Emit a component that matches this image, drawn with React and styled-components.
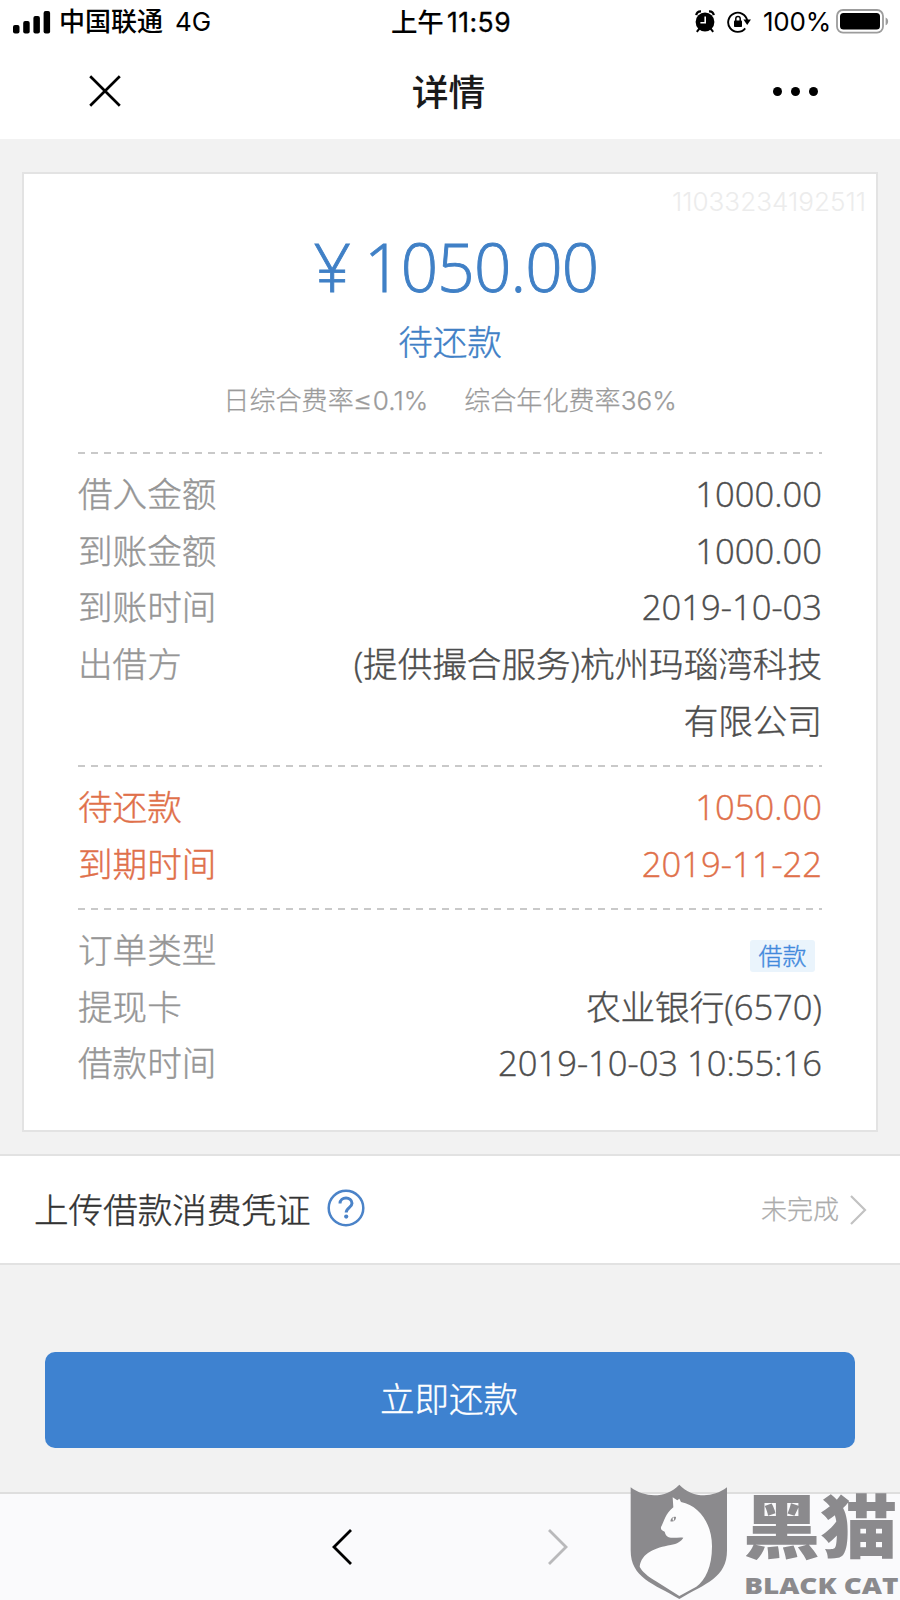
import React from "react";
import styled, { createGlobalStyle } from "styled-components";

const summary = [
  { label: "借入金额", value: "1000.00" },
  { label: "到账金额", value: "1000.00" },
  { label: "到账时间", value: "2019-10-03" },
  { label: "出借方", value: "(提供撮合服务)杭州玛瑙湾科技有限公司" },
];

const repayment = [
  { label: "待还款", value: "1050.00" },
  { label: "到期时间", value: "2019-11-22" },
];

const order = [
  { label: "订单类型", tag: "借款" },
  { label: "提现卡", value: "农业银行(6570)" },
  { label: "借款时间", value: "2019-10-03 10:55:16" },
];

const SignalIcon = () => (
  <svg width="38" height="24" viewBox="0 0 38 24">
    <rect x="0" y="15" width="6.5" height="8.5" rx="2" />
    <rect x="10.2" y="11" width="6.5" height="12.5" rx="2" />
    <rect x="20.4" y="6" width="6.5" height="17.5" rx="2" />
    <rect x="30.6" y="1" width="6.5" height="22.5" rx="2" />
  </svg>
);

const AlarmIcon = () => (
  <svg width="20" height="23" viewBox="0 0 20 23">
    <circle cx="10" cy="12" r="9.4" />
    <path
      d="M1.2 5.2C1.6 2.6 3.4 1.2 6 1.3M18.8 5.2C18.4 2.6 16.6 1.2 14 1.3"
      fill="none"
      stroke="#000"
      strokeWidth="2.2"
    />
    <path d="M4.5 18.5L1.8 21.8M15.5 18.5L18.2 21.8" stroke="#000" strokeWidth="2" />
    <path d="M10.2 6.6V12.8H5.4" fill="none" stroke="#fff" strokeWidth="1.6" />
  </svg>
);

const RotationLockIcon = () => (
  <svg width="24" height="22" viewBox="0 0 24 22">
    <path
      d="M20.2 9.5A9.6 9.6 0 1 0 18.2 17.4"
      fill="none"
      stroke="#000"
      strokeWidth="1.9"
    />
    <path d="M16.4 8.4H24L20.2 14Z" />
    <rect x="7" y="9.4" width="8" height="6.6" rx="0.8" />
    <path d="M8.8 10V7.6a2.2 2.2 0 0 1 4.4 0V10" fill="none" stroke="#000" strokeWidth="1.5" />
  </svg>
);

const BatteryIcon = () => (
  <svg width="53" height="25" viewBox="0 0 53 25">
    <rect x="1" y="1" width="46" height="22.6" rx="6" fill="none" stroke="#9c9c9c" strokeWidth="1.8" />
    <rect x="4" y="4" width="40" height="16.6" rx="3.5" />
    <path d="M49.6 8.4C53 9.6 53 15 49.6 16.2Z" fill="#9c9c9c" />
  </svg>
);

const CloseIcon = () => (
  <svg width="32" height="32" viewBox="0 0 32 32">
    <path d="M1.2 1.2L30.8 30.8M30.8 1.2L1.2 30.8" stroke="#000" strokeWidth="2.7" />
  </svg>
);

const HelpIcon = () => (
  <svg width="38" height="38" viewBox="0 0 38 38" fill="none" stroke="#4b83c8">
    <circle cx="19" cy="19" r="17.3" strokeWidth="2.5" />
    <path
      d="M13 14.6C13 7.2 25 7.4 25 14.2C25 18.6 19.2 18.6 19.2 23.6"
      strokeWidth="3"
    />
    <circle cx="19.2" cy="27.6" r="2.1" fill="#4b83c8" stroke="none" />
  </svg>
);

const Chevron = ({ left, color, width, height, stroke }) => (
  <svg width={width} height={height} viewBox={`0 0 ${width} ${height}`}>
    <path
      d={
        left
          ? `M${width - 1} 1L2 ${height / 2}L${width - 1} ${height - 1}`
          : `M1 1L${width - 2} ${height / 2}L1 ${height - 1}`
      }
      fill="none"
      stroke={color}
      strokeWidth={stroke}
    />
  </svg>
);

const CatShield = () => (
  <svg width="98" height="116" viewBox="92 103 294 348">
    <path
      d="M94 113C142 148 202 144 240 105C278 144 336 148 383 113V302C383 385 318 402 240 448C162 402 94 385 94 302Z"
      fill="#8b8a8d"
    />
    <path
      d="M220 143L234 152L240 147L245 157C300 168 338 222 338 290C338 352 318 392 291 411L240 439L170 395C146 380 128 366 121 351C126 310 168 294 214 286C234 282 246 275 252 264C236 262 222 267 208 263C200 259 198 253 196 246C186 243 184 238 185 232C194 218 196 194 222 173Z"
      fill="#fcfcfd"
    />
    <path d="M213 215C214 205 222 199 230 202C230 212 223 218 213 215Z" fill="#8b8a8d" />
    <ellipse cx="222" cy="208" rx="2.2" ry="5" fill="#fcfcfd" />
  </svg>
);

const InfoRow = ({ label, value, tag, accent }) => (
  <Row $accent={accent}>
    <dt>{label}</dt>
    <dd>{tag ? <Tag>{tag}</Tag> : value}</dd>
  </Row>
);

const App = () => {
  return (
    <>
      <GlobalStyle />
      <Page>
        <StatusBar>
          <Carrier>
            <SignalIcon />
            <span>中国联通</span>
            <span className="network">4G</span>
          </Carrier>
          <Clock>
            上午<span>11:59</span>
          </Clock>
          <Indicators>
            <AlarmIcon />
            <RotationLockIcon />
            <span>100%</span>
            <BatteryIcon />
          </Indicators>
        </StatusBar>
        <NavBar>
          <CloseIcon />
          <h1>详情</h1>
          <Dots>
            <i />
            <i />
            <i />
          </Dots>
        </NavBar>

        <Card>
          <Serial>11033234192511</Serial>
          <Amount>
            <span>¥</span>1050.00
          </Amount>
          <State>待还款</State>
          <Rates>
            <span>
              日综合费率<b>≤</b>0.1%
            </span>
            <span>综合年化费率36%</span>
          </Rates>
          <Divider />
          <Rows>
            {summary.map((item) => (
              <InfoRow key={item.label} {...item} />
            ))}
          </Rows>
          <Divider />
          <Rows>
            {repayment.map((item) => (
              <InfoRow key={item.label} {...item} accent />
            ))}
          </Rows>
          <Divider />
          <Rows>
            {order.map((item) => (
              <InfoRow key={item.label} {...item} />
            ))}
          </Rows>
        </Card>

        <Voucher>
          <span className="title">上传借款消费凭证</span>
          <HelpIcon />
          <span className="status">未完成</span>
          <Chevron color="#c2c2c2" width={17} height={30} stroke={2.2} />
        </Voucher>

        <PayButton>立即还款</PayButton>

        <ToolBar>
          <Chevron left color="#000" width={20} height={36} stroke={2.8} />
          <Chevron color="#b9b9bb" width={20} height={36} stroke={2.8} />
        </ToolBar>

        <Watermark>
          <CatShield />
          <Brand>
            <strong>黑猫</strong>
            <em>BLACK CAT</em>
          </Brand>
        </Watermark>
      </Page>
    </>
  );
};

export default App;

const GlobalStyle = createGlobalStyle`
  * {
    box-sizing: border-box;
    margin: 0;
    padding: 0;
  }
  body {
    background: #f2f2f2;
    font-family: "Open Sans", "Noto Sans CJK SC", sans-serif;
  }
  svg {
    display: block;
    flex: none;
  }
`;

const Page = styled.div`
  position: relative;
  display: flex;
  flex-direction: column;
  width: 900px;
  height: 1600px;
  overflow: hidden;
  background: #f2f2f2;
  white-space: nowrap;
`;

const StatusBar = styled.header`
  display: grid;
  grid-template-columns: 1fr auto 1fr;
  align-items: center;
  height: 42px;
  padding: 0 11px 0 13px;
  background: #fff;
  font-family: Inter, "Noto Sans CJK SC", sans-serif;
  font-size: 26px;
  line-height: 42px;
  color: #000;
`;

const Carrier = styled.div`
  display: flex;
  align-items: center;
  padding-top: 1px;
  font-weight: 500;
  svg {
    margin-right: 8px;
  }
  .network {
    margin-left: 12px;
    font-weight: 400;
  }
`;

const Clock = styled.div`
  font-size: 26.5px;
  font-weight: 500;
  span {
    margin-left: 3px;
    font-weight: 400;
    letter-spacing: 0.5px;
    -webkit-text-stroke: 0.3px;
  }
`;

const Indicators = styled.div`
  display: flex;
  align-items: center;
  justify-content: flex-end;
  svg:first-child {
    margin-right: 12px;
  }
  span {
    margin: 0 5px 0 12px;
    letter-spacing: -0.2px;
  }
`;

const NavBar = styled.nav`
  display: flex;
  align-items: center;
  justify-content: space-between;
  height: 97px;
  padding: 0 82px 0 89px;
  background: #fff;
  h1 {
    padding: 4px 0 0 3px;
    font-size: 36.8px;
    font-weight: 500;
    line-height: 93px;
    color: #1a1a1a;
  }
`;

const Dots = styled.div`
  display: flex;
  gap: 9px;
  padding-top: 2px;
  i {
    width: 9px;
    height: 9px;
    border-radius: 50%;
    background: #000;
  }
`;

const Card = styled.section`
  width: 856px;
  height: 960px;
  margin: 33px 22px 0;
  padding: 0 54px;
  background: #fff;
  border: 2px solid #e3e3e3;
`;

const Serial = styled.p`
  height: 54px;
  margin-right: -44px;
  font-family: Inter, sans-serif;
  font-size: 26.1px;
  line-height: 56px;
  font-weight: 300;
  text-align: right;
  color: #ececec;
`;

const Amount = styled.h2`
  height: 80px;
  padding-left: 12px;
  font-size: 65.5px;
  line-height: 78px;
  font-weight: 300;
  letter-spacing: -0.8px;
  text-align: center;
  color: #4080c6;
  -webkit-text-stroke: 0.9px;
  span {
    margin-right: 14px;
  }
`;

const State = styled.p`
  height: 68px;
  font-size: 34.5px;
  line-height: 68px;
  font-weight: 300;
  text-align: center;
  color: #4080c6;
  -webkit-text-stroke: 0.4px;
`;

const Rates = styled.p`
  display: flex;
  justify-content: center;
  gap: 36px;
  height: 76px;
  font-family: Inter, "Noto Sans CJK SC", sans-serif;
  font-size: 26.1px;
  line-height: 49px;
  font-weight: 300;
  color: #9b9b9b;
  -webkit-text-stroke: 0.25px;
  b {
    display: inline-block;
    margin-right: 2px;
    font-weight: inherit;
    transform: scaleX(1.15);
  }
`;

const Divider = styled.hr`
  height: 2px;
  border: 0;
  background: repeating-linear-gradient(
    90deg,
    #c9c9c9 0 7px,
    transparent 7px 13px
  );
`;

const Rows = styled.dl`
  padding: 12px 0 15.5px;
`;

const Row = styled.div`
  display: flex;
  justify-content: space-between;
  font-size: 34.6px;
  line-height: 56.7px;
  font-weight: 300;
  color: ${({ $accent }) => ($accent ? "#e0704a" : "#4d4d4d")};
  -webkit-text-stroke: 0.4px;
  dt {
    color: ${({ $accent }) => ($accent ? "#e0704a" : "#969696")};
  }
  dd {
    width: 480px;
    text-align: right;
    white-space: normal;
  }
`;

const Tag = styled.span`
  display: inline-block;
  margin: 4px 7px 0 0;
  padding: 0 8.5px;
  border-radius: 3px;
  background: #eaf4fc;
  font-size: 24px;
  line-height: 32px;
  font-weight: 300;
  vertical-align: middle;
  color: #4289dc;
`;

const Voucher = styled.section`
  display: flex;
  align-items: center;
  height: 111px;
  margin-top: 22px;
  padding: 0 33px 3px 34px;
  background: #fff;
  border-top: 2px solid #e2e2e2;
  border-bottom: 2px solid #e2e2e2;
  .title {
    margin-right: 16px;
    font-size: 34.6px;
    font-weight: 300;
    color: #333;
    -webkit-text-stroke: 0.4px;
  }
  .status {
    margin-left: auto;
    margin-right: 11px;
    font-size: 26px;
    font-weight: 300;
    color: #acacac;
    -webkit-text-stroke: 0.25px;
  }
  svg:last-child {
    margin-top: 3px;
  }
`;

const PayButton = styled.button`
  width: 810px;
  height: 96px;
  margin: 87px 45px 0;
  padding: 0 2px 6px 0;
  border: 0;
  border-radius: 10px;
  background: #3e82d0;
  font-family: inherit;
  font-size: 34.5px;
  font-weight: 300;
  color: #fff;
  -webkit-text-stroke: 0.4px;
`;

const ToolBar = styled.footer`
  display: flex;
  align-items: center;
  justify-content: space-between;
  height: 108px;
  margin-top: auto;
  padding: 0 332px;
  background: #fafafc;
  border-top: 2px solid #dedede;
`;

/* floats over the bottom right corner of the page */
const Watermark = styled.div`
  position: absolute;
  right: 0;
  bottom: 0;
  display: flex;
  gap: 15px;
  width: 270px;
  color: #8b8a8d;
`;

const Brand = styled.div`
  display: flex;
  flex-direction: column;
  strong {
    height: 87px;
    font-size: 69px;
    line-height: 85px;
    font-weight: 900;
    transform: scaleX(1.12);
    transform-origin: left;
  }
  em {
    padding-left: 1px;
    font-family: "Open Sans", sans-serif;
    font-size: 23px;
    line-height: 28px;
    font-style: normal;
    font-weight: 800;
    transform: scaleX(1.21);
    transform-origin: left;
  }
`;
